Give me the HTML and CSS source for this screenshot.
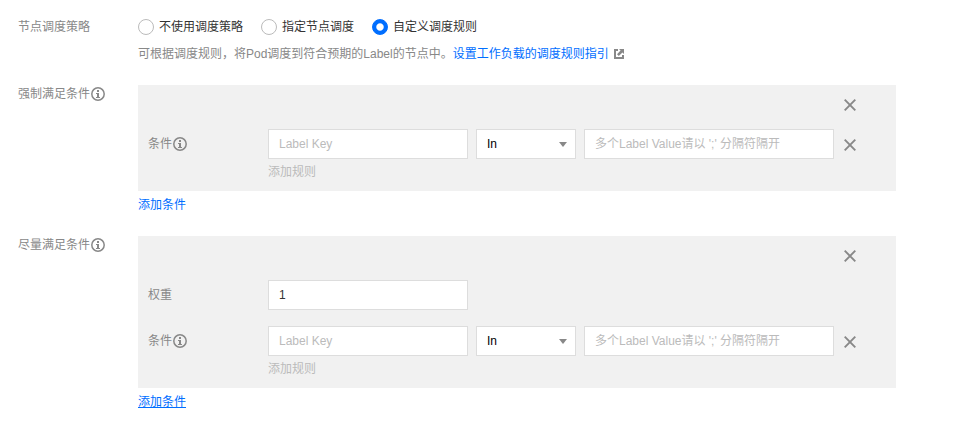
FILE: index.html
```html
<!DOCTYPE html>
<html lang="zh-CN">
<head>
<meta charset="utf-8">
<title>节点调度策略</title>
<link rel="stylesheet" href="styles.css">
</head>
<body>
<svg class="defs" width="0" height="0" aria-hidden="true">
  <symbol id="info" viewBox="0 0 14 14"><circle cx="7" cy="7" r="6.200" fill="none" stroke="#888" stroke-width="1.500"/><path d="M6 3h2v2H6zM5 6h3v4h1v1H5v-1h1V7H5z" fill="#888"/></symbol>
  <symbol id="close" viewBox="0 0 12 12"><path d="M.7.7l10.600 10.600M11.300.7L.7 11.300" fill="none" stroke="#888" stroke-width="1.900"/></symbol>
  <symbol id="external" viewBox="0 0 10 10"><path d="M4 1H1v8h8V6" fill="none" stroke="#888" stroke-width="2"/><path d="M5 0h5v5L8.400 3.400 4.800 7 3 5.200 6.600 1.600z" fill="#888"/></symbol>
</svg>
<main class="form">
  <section class="form-row">
    <div class="label">节点调度策略</div>
    <div>
      <div class="radios">
        <label class="radio"><i class="dot"></i>不使用调度策略</label>
        <label class="radio"><i class="dot"></i>指定节点调度</label>
        <label class="radio"><i class="dot checked"></i>自定义调度规则</label>
      </div>
      <p class="help">可根据调度规则，将Pod调度到符合预期的Label的节点中。<a class="link">设置工作负载的调度规则指引</a><svg class="external"><use href="#external"/></svg></p>
    </div>
  </section>

  <section class="form-row">
    <div class="label">强制满足条件<svg class="info"><use href="#info"/></svg></div>
    <div>
      <div class="panel">
        <div class="panel-head"><svg class="close"><use href="#close"/></svg></div>
        <div class="field">
          <div class="field-label">条件<svg class="info"><use href="#info"/></svg></div>
          <div class="controls">
            <div class="input key placeholder">Label Key</div>
            <div class="input select">In<i class="arrow"></i></div>
            <div class="input value placeholder">多个Label Value请以 ';' 分隔符隔开</div>
            <svg class="close"><use href="#close"/></svg>
          </div>
        </div>
        <div class="add-rule">添加规则</div>
      </div>
      <a class="link add">添加条件</a>
    </div>
  </section>

  <section class="form-row">
    <div class="label">尽量满足条件<svg class="info"><use href="#info"/></svg></div>
    <div>
      <div class="panel">
        <div class="panel-head"><svg class="close"><use href="#close"/></svg></div>
        <div class="field weight">
          <div class="field-label">权重</div>
          <div class="controls"><div class="input key number">1</div></div>
        </div>
        <div class="field">
          <div class="field-label">条件<svg class="info"><use href="#info"/></svg></div>
          <div class="controls">
            <div class="input key placeholder">Label Key</div>
            <div class="input select">In<i class="arrow"></i></div>
            <div class="input value placeholder">多个Label Value请以 ';' 分隔符隔开</div>
            <svg class="close"><use href="#close"/></svg>
          </div>
        </div>
        <div class="add-rule">添加规则</div>
      </div>
      <a class="link add hovered">添加条件</a>
    </div>
  </section>
</main>
</body>
</html>
```
FILE: styles.css
```css
* { box-sizing: border-box; }
body {
  margin: 0;
  background: #fff;
  color: #888;
  font: 12px/18px "Liberation Sans", "Noto Sans CJK SC", sans-serif;
}
.defs { display: none; }
.form { padding: 18px 0 0 18px; }
.form-row {
  display: grid;
  grid-template-columns: 120px 758px;
}
.label, .field-label {
  display: flex;
  align-items: center;
  height: 18px;
}
.info { width: 14px; height: 14px; margin-left: 1px; }
.radios { display: flex; gap: 18px; }
.radio {
  display: flex;
  align-items: center;
  gap: 5px;
  color: #333;
}
.dot {
  width: 16px;
  height: 16px;
  border: 1px solid #bbb;
  border-radius: 50%;
  background: #fff;
}
.checked {
  border-color: #006eff;
  background: radial-gradient(circle, #fff 3.200px, #006eff 4.200px);
}
.help {
  display: flex;
  align-items: center;
  height: 18px;
  margin: 9px 0 22px;
  white-space: nowrap;
}
.link { color: #006eff; }
.external { width: 10px; height: 10px; margin-left: 5px; }
.panel { background: #f1f1f1; height: 106px; }
.panel:has(.weight) { height: 152px; }
.panel-head {
  display: flex;
  justify-content: flex-end;
  height: 44px;
  padding: 14px 40px 0 0;
}
.close { width: 12px; height: 12px; flex: none; }
.field {
  display: grid;
  grid-template-columns: 120px 1fr;
  align-items: center;
  height: 30px;
  padding-left: 10px;
}
.weight { margin-bottom: 16px; }
.controls { display: flex; align-items: center; gap: 8px; }
.controls .close { margin: 2px 0 0 2px; }
.input {
  height: 30px;
  padding: 0 10px;
  border: 1px solid #ddd;
  background: #fff;
  color: #000;
  line-height: 28px;
  white-space: nowrap;
}
.key { width: 200px; }
.select {
  display: flex;
  align-items: center;
  justify-content: space-between;
  width: 100px;
  padding-right: 8px;
}
.arrow {
  border: 4px solid transparent;
  border-top: 5px solid #888;
  border-bottom: 0;
}
.value { width: 250px; }
.placeholder { color: #bbb; }
.number { color: #333; }
.add-rule { padding: 4px 0 0 130px; color: #bbb; }
.add { display: block; width: max-content; margin: 5px 0 22px; }
.hovered { text-decoration: underline; }
```
